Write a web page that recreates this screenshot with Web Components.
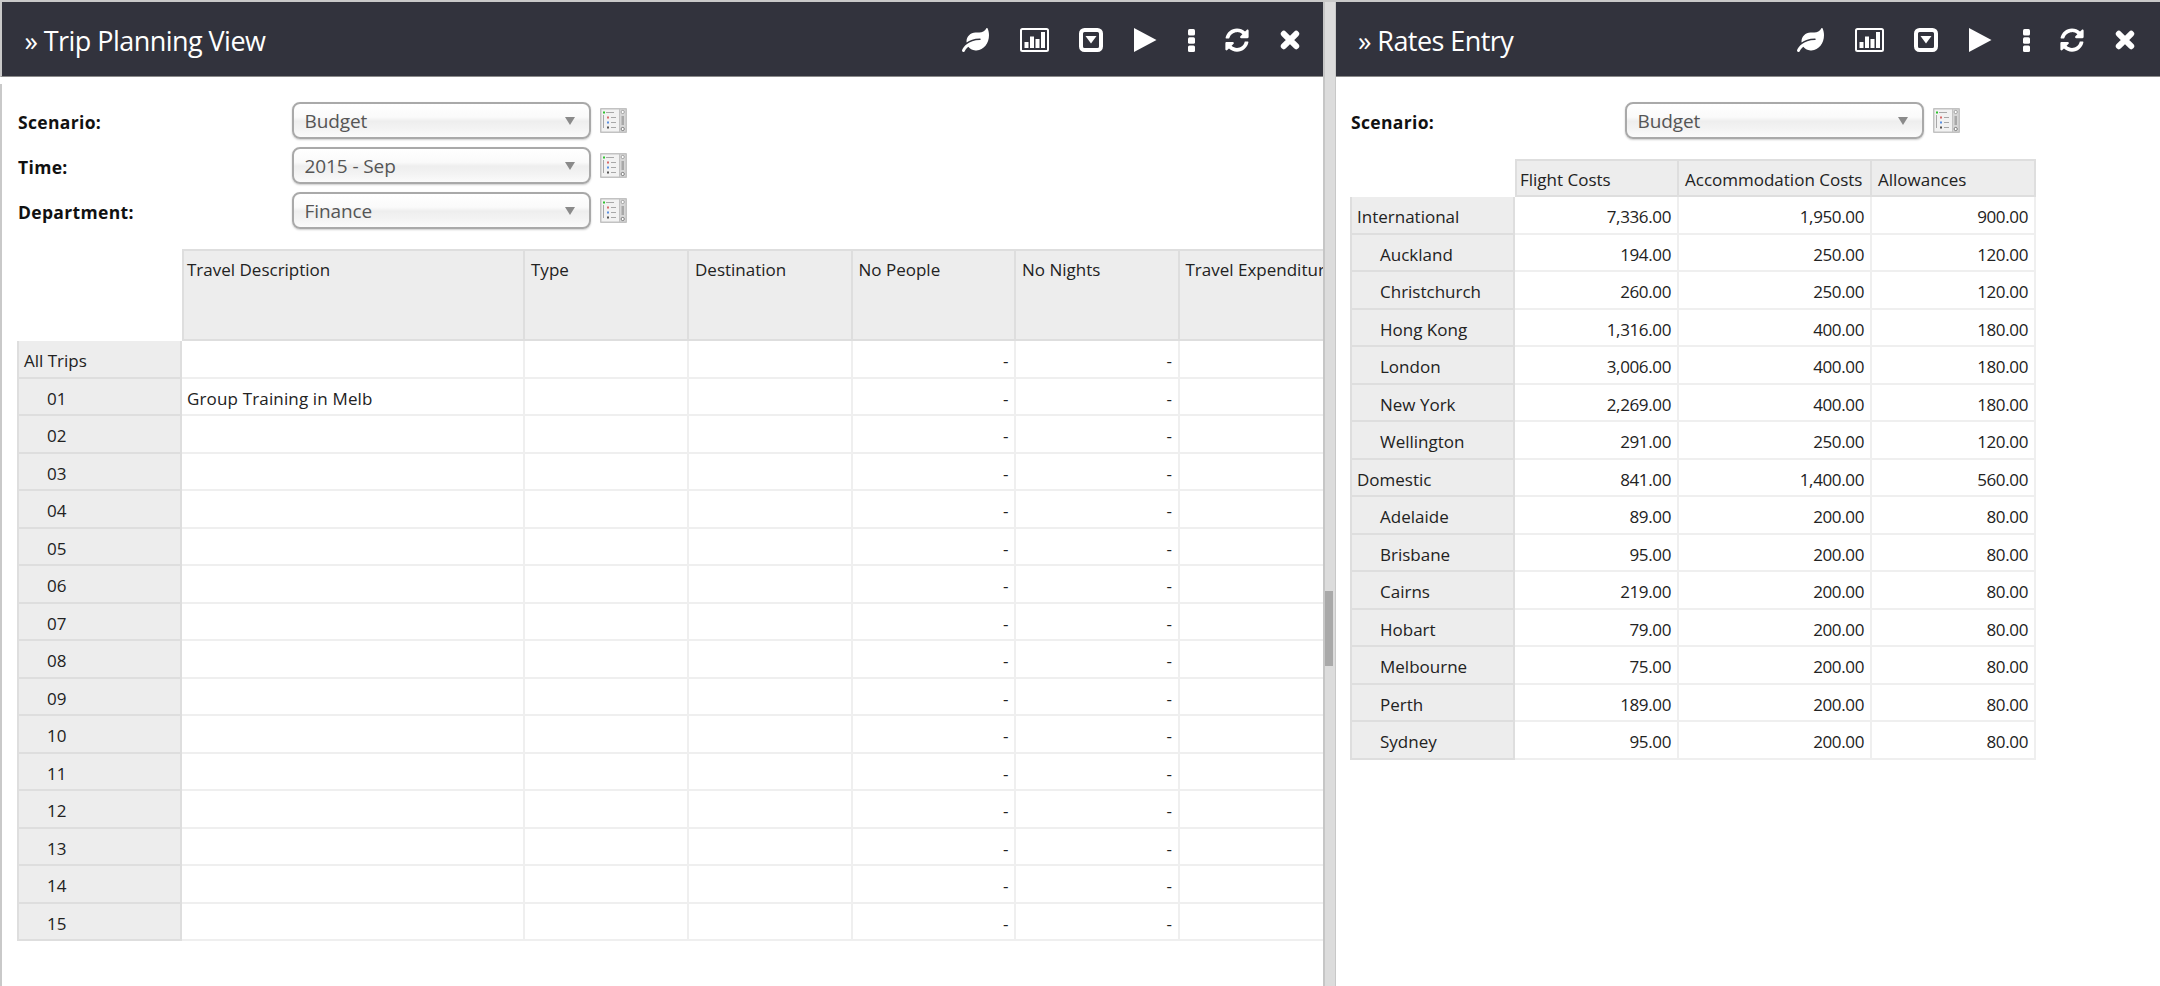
<!DOCTYPE html>
<html><head><meta charset="utf-8"><title>Trip Planning</title>
<style>
html,body{margin:0;height:100%;background:#fff;overflow:hidden}
body{font-family:"Open Sans","Noto Sans","Liberation Sans",sans-serif;font-size:17px;color:#222}
</style></head><body>
<x-app>
  <x-panel title-text="Trip Planning View" style="--edge:2px;--pr:23px;width:1323px">
    <x-filter label="Scenario:" value="Budget"></x-filter>
    <x-filter label="Time:" value="2015 - Sep"></x-filter>
    <x-filter label="Department:" value="Finance"></x-filter>
    <x-grid id="g1" style="--mt:20px"></x-grid>
  </x-panel>
  <x-splitter></x-splitter>
  <x-panel title-text="Rates Entry" style="--edge:0px;--pr:25px;--hl:23px;flex:1;margin-left:-1px">
    <x-filter label="Scenario:" value="Budget"></x-filter>
    <x-grid id="g2" style="--mt:20px"></x-grid>
  </x-panel>
</x-app>
<script>
class XApp extends HTMLElement{constructor(){super();this.attachShadow({mode:'open'}).innerHTML=`<style>
:host{display:flex;height:984px;border-top:2px solid #c9c9c9;overflow:hidden}</style><slot></slot>`}}
customElements.define('x-app',XApp);

class XSplitter extends HTMLElement{constructor(){super();this.attachShadow({mode:'open'}).innerHTML=`<style>
:host{display:block;flex:none;width:13px;box-sizing:border-box;background:#dcdcdc;border-left:2px solid #c6c6c6;border-right:1px solid #c8c8c8;position:relative;z-index:1}
.t{width:8px;height:75px;background:#a9a9a9;margin-top:589px}
</style><div class="t"></div>`}}
customElements.define('x-splitter',XSplitter);

const ICONS=`
<svg width="27" height="24" viewBox="0 0 576 512"><path fill="#fff" d="M546.2 9.7c-5.6-12.5-21.6-13-28.3-1.2C486.9 62.4 431.4 96 368 96h-80C182 96 96 182 96 288c0 7 .8 13.7 1.5 20.5C161.3 262.8 252.4 224 384 224c8.8 0 16 7.2 16 16s-7.2 16-16 16C132.6 256 26 410.1 2.4 468c-6.6 16.3 1.2 34.9 17.5 41.600 16.400 6.800 35-1.100 41.800-17.300 1.500-3.600 20.900-47.900 71.900-90.600 32.400 43.900 94 85.800 174.900 77.200C465.500 467.500 576 326.700 576 154.300c0-50.200-10.800-102.200-29.800-144.600z"/></svg>
<svg width="29" height="24" viewBox="0 0 29 24"><rect x="1" y="1" width="27" height="22" rx="1.500" fill="none" stroke="#fff" stroke-width="2"/>
 <g fill="#fff"><rect x="4.500" y="14" width="4" height="6"/><rect x="10" y="8.500" width="4" height="11.500"/><rect x="15.500" y="11" width="4" height="9"/><rect x="21" y="4" width="4" height="16"/></g></svg>
<svg width="24" height="24" viewBox="0 0 24 24"><rect x="2" y="2" width="20" height="20" rx="3.500" fill="none" stroke="#fff" stroke-width="4"/><path d="M6.500 8H17.500L12 15.500Z" fill="#fff"/></svg>
<svg width="23" height="24" viewBox="0 0 23 24"><path d="M0 0L22.500 12 0 24Z" fill="#fff"/></svg>
<svg width="7" height="23" viewBox="0 0 7 23" fill="#fff"><rect width="7" height="6.500" rx="1.500"/><rect y="8.200" width="7" height="6.500" rx="1.500"/><rect y="16.400" width="7" height="6.500" rx="1.500"/></svg>
<svg width="24" height="24" viewBox="0 0 512 512"><path fill="#fff" d="M370.72 133.28C339.458 104.008 298.888 87.962 255.848 88c-77.458.068-144.328 53.178-162.791 126.85-1.344 5.363-6.122 9.15-11.651 9.15H24.103c-7.498 0-13.194-6.807-11.807-14.176C33.933 94.924 134.813 8 256 8c66.448 0 126.791 26.136 171.315 68.685L463.03 40.97C478.149 25.851 504 36.559 504 57.941V192c0 13.255-10.745 24-24 24H345.941c-21.382 0-32.09-25.851-16.971-40.971l41.75-41.749zM32 296h134.059c21.382 0 32.09 25.851 16.971 40.971l-41.75 41.75c31.262 29.273 71.835 45.319 114.876 45.28 77.418-.07 144.315-53.144 162.787-126.849 1.344-5.363 6.122-9.15 11.651-9.15h57.304c7.498 0 13.194 6.807 11.807 14.176C478.067 417.076 377.187 504 256 504c-66.448 0-126.791-26.136-171.315-68.685L48.970 471.030C33.851 486.149 8 475.441 8 454.059V320c0-13.255 10.745-24 24-24z"/></svg>
<svg width="20" height="20" viewBox="0 0 20 20"><path d="M3.800 3.800L16.200 16.200M16.200 3.800L3.800 16.200" stroke="#fff" stroke-width="6" stroke-linecap="round"/></svg>`;

class XPanel extends HTMLElement{constructor(){super();const s=this.attachShadow({mode:'open'});s.innerHTML=`<style>
:host{display:flex;flex-direction:column;flex:none;min-width:0;overflow:hidden;height:984px;box-sizing:border-box}
header{flex:none;height:75px;box-sizing:border-box;background:#32333d;border-bottom:1px solid #8a8a8a;border-left:var(--edge) solid #c9c9c9;display:flex;align-items:center;padding:2px var(--pr) 0 var(--hl,22.500px);color:#fff}
h1{margin:0;font:400 27px "Open Sans","Noto Sans",sans-serif;letter-spacing:-.55px;flex:1;white-space:nowrap;line-height:1}
.tools{display:flex;align-items:center;gap:30.700px}
.tools svg{display:block;flex:none}
main{flex:1;min-height:0;margin-top:7px;border-left:var(--edge) solid #c9c9c9;padding:18px 0 0 15px;display:flex;flex-direction:column;gap:8px;overflow:hidden}
</style><header><h1></h1><div class="tools">${ICONS}</div></header><main><slot></slot></main>`;
s.querySelector('h1').textContent='» '+this.getAttribute('title-text')}}
customElements.define('x-panel',XPanel);

const LIST=`<svg width="27" height="25" viewBox="0 0 27 25"><rect width="27" height="25" rx="1" fill="#c2c2c2"/><rect x="1.500" y="1.500" width="17.500" height="22" fill="#f2f2f2"/><rect x="20" y="1.500" width="5.500" height="22" fill="#d6d6d6"/><rect x="21.500" y="8" width="2.500" height="9" fill="#a8a8a8"/>
<circle cx="22.700" cy="4" r="1.600" fill="#fff" stroke="#888" stroke-width=".7"/><circle cx="22.700" cy="21" r="1.600" fill="#fff" stroke="#555" stroke-width=".7"/>
<g fill="#a8a8a8"><rect x="6" y="4" width="8" height="1"/><rect x="11" y="9" width="5" height="1"/><rect x="11" y="14" width="5" height="1"/><rect x="11" y="19" width="5" height="1"/><rect x="3" y="7" width="1" height="13"/></g>
<rect x="3" y="3.500" width="2" height="2" fill="#2fc22f"/><rect x="7" y="8.500" width="2" height="2" fill="#d96a6a"/><rect x="7" y="13.500" width="2" height="2" fill="#5a8fe0"/><rect x="7" y="18.500" width="2" height="2" fill="#555"/></svg>`;

class XFilter extends HTMLElement{constructor(){super();const s=this.attachShadow({mode:'open'});s.innerHTML=`<style>
:host{display:flex;align-items:center;height:37px;flex:none}
label{width:274.500px;padding-left:1px;padding-top:2px;box-sizing:border-box;font-weight:700;color:#111;font-size:17.500px;letter-spacing:.33px;white-space:nowrap}
.sel{width:299px;height:37px;box-sizing:border-box;border:2px solid #a9a9a9;border-radius:8px;background:linear-gradient(#fff 0,#fafafa 40%,#eee 52%,#f3f3f3 75%,#fbfbfb 100%);box-shadow:0 1px 2px rgba(0,0,0,.2);display:flex;align-items:center;justify-content:space-between;padding:1px 13px 0 11px;color:#555;font-size:19px;letter-spacing:-.1px}
i{display:block;width:0;height:0;border-left:5.500px solid transparent;border-right:5.500px solid transparent;border-top:8px solid #8a8a8a;margin-right:1px}
svg{margin-left:9px;display:block}
</style><label></label><div class="sel"><span></span><i></i></div>${LIST}`;
s.querySelector('label').textContent=this.getAttribute('label');s.querySelector('span').textContent=this.getAttribute('value')}}
customElements.define('x-filter',XFilter);

class XGrid extends HTMLElement{constructor(){super();this.attachShadow({mode:'open'})}
 setData({cols,headH,heads,rows}){
  const cell=(c,t)=>`<div class="${c}">${t===''?'':`<span>${t}</span>`}</div>`;
  let h=`<div class="corner"></div>`+heads.map(t=>cell('h',t)).join('');
  for(const r of rows){h+=cell('r'+(r.i?' i':''),r.n)+r.v.map((t,k)=>cell('c'+(r.a&&r.a[k]==='l'?' l':''),t)).join('')}
  this.shadowRoot.innerHTML=`<style>
:host{display:block;flex:none;margin-top:calc(var(--mt) - 8px)}
.g{display:grid;grid-template-columns:${cols};grid-template-rows:${headH}px repeat(${rows.length},37.500px);width:max-content}
.g>div{box-sizing:border-box;white-space:nowrap;overflow:hidden;font-size:17px;color:#222}
.h{background:#ededed;border:solid #dedede;border-width:2px 2px 2px 0;padding:7px 0 0 6px;letter-spacing:0}
.h:nth-child(2){border-left:2px solid #dedede;padding-left:3px}
.r{background:#ededed;border:solid #dedede;border-width:0 2px 2px 2px;padding:4px 0 0 5px;display:flex;align-items:center;letter-spacing:0}
.r.i{padding-left:28px}
.c{border:solid #efefef;border-width:0 2px 2px 0;display:flex;align-items:center;justify-content:flex-end;padding:4px 6px 0 0;letter-spacing:-.37px}
.c.l{justify-content:flex-start;padding:4px 0 0 5px;letter-spacing:.15px}
</style><div class="g">${h}</div>`;
 }}
customElements.define('x-grid',XGrid);

const trips=[{n:'All Trips',v:['','','','-','-',''],a:['l']}];
for(let i=1;i<=15;i++){const n=String(i).padStart(2,'0');trips.push({n,i:1,v:[i===1?'Group Training in Melb':'','','','-','-',''],a:['l']})}
document.getElementById('g1').setData({
 cols:'165px 343px 164px 163.500px 163.500px 163.500px 170px',headH:92,
 heads:['Travel Description','Type','Destination','No People','No Nights','Travel Expenditure'],rows:trips});
const R=(n,i,a,b,c)=>({n,i,v:[a,b,c]});
document.getElementById('g2').setData({
 cols:'165px 164px 193px 164px',headH:38,
 heads:['Flight Costs','Accommodation Costs','Allowances'],
 rows:[R('International',0,'7,336.00','1,950.00','900.00'),R('Auckland',1,'194.00','250.00','120.00'),R('Christchurch',1,'260.00','250.00','120.00'),R('Hong Kong',1,'1,316.00','400.00','180.00'),R('London',1,'3,006.00','400.00','180.00'),R('New York',1,'2,269.00','400.00','180.00'),R('Wellington',1,'291.00','250.00','120.00'),R('Domestic',0,'841.00','1,400.00','560.00'),R('Adelaide',1,'89.00','200.00','80.00'),R('Brisbane',1,'95.00','200.00','80.00'),R('Cairns',1,'219.00','200.00','80.00'),R('Hobart',1,'79.00','200.00','80.00'),R('Melbourne',1,'75.00','200.00','80.00'),R('Perth',1,'189.00','200.00','80.00'),R('Sydney',1,'95.00','200.00','80.00')]});
</script></body></html>
